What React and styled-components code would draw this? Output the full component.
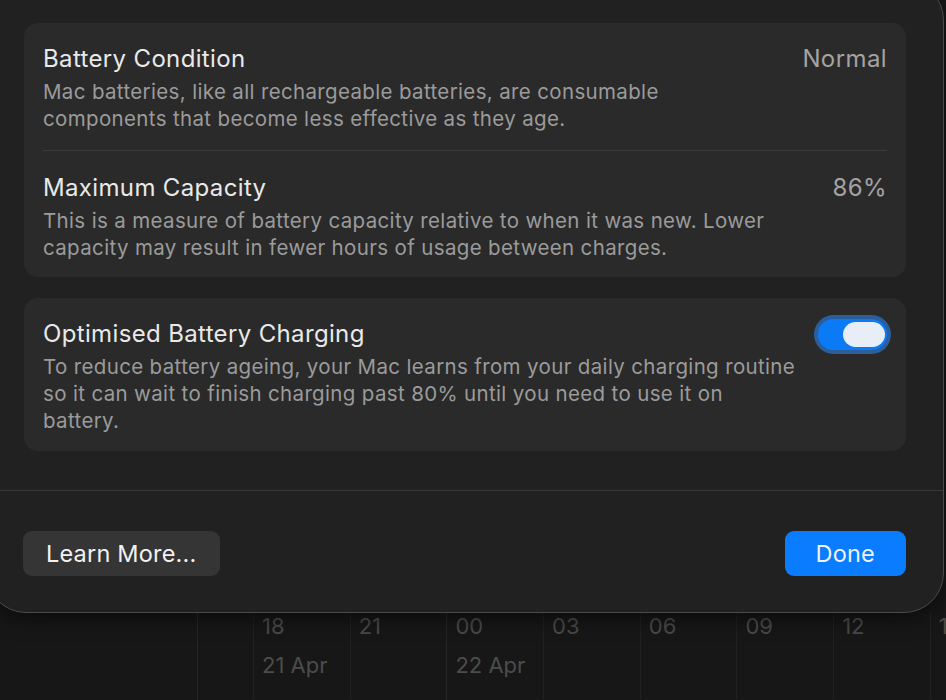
import React from "react";
import styled, {createGlobalStyle} from "styled-components";

const GlobalStyle = createGlobalStyle`
  html, body {
    margin: 0;
    padding: 0;
    background: #171717;
    height: 700px;
    overflow: hidden;
  }
  body {
    font-family: "Inter", "Noto Sans", sans-serif;
    -webkit-font-smoothing: antialiased;
  }
`;

const hours = ["18", "21", "00", "03", "06", "09", "12", "15"];
const dates = {0: "21 Apr", 2: "22 Apr"};

const App = () => {
  return (
    <Page>
      <GlobalStyle />
      <Dialog>
        <Body>
          <Card>
            <Row $pad="22px 0 18px">
              <RowText>
                <RowTitle>Battery Condition</RowTitle>
                <RowDesc>
                  Mac batteries, like all rechargeable batteries, are consumable
                  <br />
                  components that become less effective as they age.
                </RowDesc>
              </RowText>
              <RowValue>Normal</RowValue>
            </Row>
            <Divider />
            <Row $pad="23px 0 16px">
              <RowText>
                <RowTitle>Maximum Capacity</RowTitle>
                <RowDesc>
                  This is a measure of battery capacity relative to when it was new. Lower
                  <br />
                  capacity may result in fewer hours of usage between charges.
                </RowDesc>
              </RowText>
              <RowValue>86%</RowValue>
            </Row>
          </Card>

          <Card>
            <Row $pad="22px 0 17px">
              <RowText>
                <RowTitle>Optimised Battery Charging</RowTitle>
                <RowDesc>
                  To reduce battery ageing, your Mac learns from your daily charging routine
                  <br />
                  so it can wait to finish charging past 80% until you need to use it on
                  <br />
                  battery.
                </RowDesc>
              </RowText>
              <Switch role="switch" aria-checked="true">
                <Knob />
              </Switch>
            </Row>
          </Card>
        </Body>

        <Footer>
          <Button>Learn More...</Button>
          <Button $primary>Done</Button>
        </Footer>
      </Dialog>

      <Chart>
        <SidePanel />
        <Columns>
          {hours.map((h, i) => (
            <Column key={h} $day={i === 2}>
              <HourLabel>{h}</HourLabel>
              <DateLabel>{dates[i] || "\u00a0"}</DateLabel>
            </Column>
          ))}
        </Columns>
      </Chart>
    </Page>
  );
};

export default App;

const Page = styled.div`
  width: 946px;
  height: 700px;
  overflow: hidden;
  display: flex;
  flex-direction: column;
`;

const Dialog = styled.div`
  position: relative;
  z-index: 1;
  width: 958px;
  margin: -20px 0 0 -14px;
  background: #212121;
  border: 1px solid #4a4a4a;
  border-radius: 40px;
  box-shadow: 0 6px 20px rgba(0, 0, 0, 0.5);
  box-sizing: border-box;
`;

const Body = styled.div`
  display: flex;
  flex-direction: column;
  gap: 21px;
  padding: 42px 37px 39px 37px;
  border-bottom: 1px solid #383838;
`;

const Card = styled.div`
  background: #2a2a2a;
  border-radius: 14px;
  padding: 0 19px;
`;

const Row = styled.div`
  display: flex;
  align-items: flex-start;
  justify-content: space-between;
  gap: 16px;
  padding: ${(p) => p.$pad};
`;

const RowText = styled.div`
  flex: 1;
  display: flex;
  flex-direction: column;
  gap: 5px;
`;

const RowTitle = styled.div`
  font-size: 24px;
  line-height: 28px;
  color: #e9e9e9;
  letter-spacing: 0.35px;
`;

const RowDesc = styled.div`
  font-size: 20.5px;
  line-height: 27px;
  color: #9b9b9b;
  letter-spacing: 0.35px;
  white-space: nowrap;
`;

const RowValue = styled.div`
  font-size: 24px;
  line-height: 28px;
  color: #a3a3a3;
  letter-spacing: 0.4px;
`;

const Divider = styled.div`
  height: 1px;
  background: #3b3b3b;
`;

const Switch = styled.div`
  flex: none;
  display: flex;
  justify-content: flex-end;
  align-items: center;
  box-sizing: border-box;
  width: 69px;
  height: 31px;
  margin: -1px 0 0 0;
  padding: 0 2px;
  border-radius: 16px;
  background: #0b7bf5;
  box-shadow: 0 0 0 4px #2b5e9b;
`;

const Knob = styled.div`
  width: 42px;
  height: 25px;
  border-radius: 13px;
  background: #e8eef8;
`;

const Footer = styled.div`
  display: flex;
  justify-content: space-between;
  align-items: center;
  padding: 40px 37px 36px 36px;
`;

const Button = styled.div`
  height: 45px;
  display: flex;
  align-items: center;
  padding: 0 ${(p) => (p.$primary ? "31px" : "23px")};
  border-radius: 9px;
  font-size: 23.5px;
  letter-spacing: 0.2px;
  color: #f2f2f2;
  background: ${(p) => (p.$primary ? "#0a7cff" : "#353535")};
`;

const Chart = styled.div`
  flex: 1;
  display: flex;
  margin-top: -1px;
`;

const SidePanel = styled.div`
  width: 197px;
  flex: none;
  border-right: 1px solid #262626;
`;

const Columns = styled.div`
  display: flex;
  padding-left: 55px;
`;

const Column = styled.div`
  width: 96.7px;
  flex: none;
  box-sizing: border-box;
  border-left: 1px ${(p) => (p.$day ? "solid #262626" : "dotted #2a2a2a")};
  padding-left: 8px;
  display: flex;
  flex-direction: column;
`;

const HourLabel = styled.div`
  font-size: 22px;
  line-height: 28px;
  margin-top: 0;
  color: #4a4a4a;
`;

const DateLabel = styled.div`
  font-size: 22px;
  line-height: 28px;
  margin-top: 11px;
  color: #4c4c4c;
  height: 60px;
`;
